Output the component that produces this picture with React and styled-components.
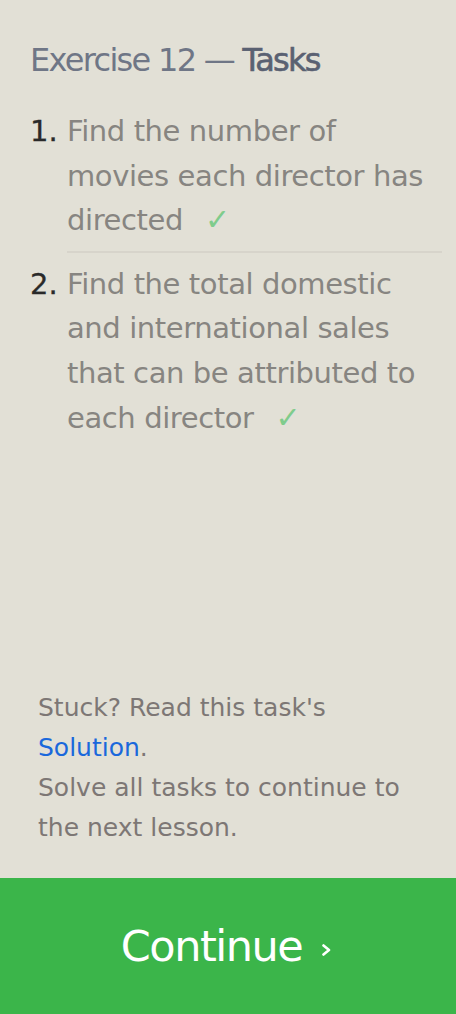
import React from "react";
import styled, { createGlobalStyle } from "styled-components";

const Global = createGlobalStyle`
  html, body { margin: 0; padding: 0; background: #e2e0d6; }
  body { font-family: "DejaVu Sans", Verdana, sans-serif; }
  #root { min-height: 100vh; }
`;

const Page = styled.div`
  width: 456px;
  height: 1014px;
  display: flex;
  flex-direction: column;
  background: #e2e0d6;
  overflow: hidden;
`;

const Panel = styled.div`
  flex: 1;
  display: flex;
  flex-direction: column;
  justify-content: space-between;
  padding: 40px 14px 30px 29px;
`;

const Title = styled.h2`
  margin: 0 0 29px 1px;
  font-size: 32px;
  font-weight: normal;
  color: #6f7686;
  line-height: 40px;
  letter-spacing: -1.7px;
  white-space: nowrap;
`;

const Strong = styled.span`
  color: #5a6172;
  -webkit-text-stroke: 0.6px #5a6172;
`;

const List = styled.ol`
  margin: 0;
  padding: 0;
  list-style: none;
`;

const Item = styled.li`
  display: flex;
  font-size: 29px;
  line-height: 44.6px;
`;

const Num = styled.span`
  box-sizing: border-box;
  color: #2a2a2a;
  width: 38px;
  flex: none;
  padding-left: 1px;
  -webkit-text-stroke: 0.3px #2a2a2a;
  padding-top: ${(p) => p.$pad || 0}px;
`;

const Text = styled.div`
  flex: 1;
  color: #878581;
  letter-spacing: -0.4px;
  padding: ${(p) => (p.$divider ? "0 6px 8px 0" : "9px 6px 0 0")};
  border-bottom: ${(p) => (p.$divider ? "2px solid #d7d4cb" : "none")};
`;

const Check = styled.span`
  color: #7fcc8c;
  margin-left: 22px;
  font-size: 30px;
`;

const Help = styled.div`
  padding-left: 9px;
  font-size: 25px;
  line-height: 40px;
  color: #7d7775;
`;

const Link = styled.a`
  color: #1a68dc;
  text-decoration: none;
`;

const Button = styled.button`
  flex: none;
  height: 136px;
  width: 100%;
  border: none;
  background: #3bb54a;
  color: #fff;
  font-family: inherit;
  font-size: 43px;
  letter-spacing: -1.5px;
  display: flex;
  align-items: center;
  justify-content: center;
  gap: 20px;
  padding: 0 4px 0 0;
  cursor: pointer;
`;

const Arrow = styled.svg`
  width: 9px;
  height: 12px;
  margin-top: 8px;
`;

export default function App() {
  return (
    <Page>
      <Global />
      <Panel>
        <div>
          <Title>
            Exercise 12 — <Strong>Tasks</Strong>
          </Title>
          <List>
            <Item>
              <Num>1.</Num>
              <Text $divider>
                Find the number of movies each director has directed
                <Check>✓</Check>
              </Text>
            </Item>
            <Item>
              <Num $pad={9}>2.</Num>
              <Text>
                Find the total domestic and international sales that can be
                attributed to each director
                <Check>✓</Check>
              </Text>
            </Item>
          </List>
        </div>
        <Help>
          Stuck? Read this task's
          <br />
          <Link href="#">Solution</Link>.
          <br />
          Solve all tasks to continue to the next lesson.
        </Help>
      </Panel>
      <Button>
        Continue
        <Arrow viewBox="0 0 9 12" aria-hidden="true">
          <polyline
            points="1.5,1.5 7,6 1.5,10.5"
            fill="none"
            stroke="#fff"
            strokeWidth="2.6"
            strokeLinecap="round"
            strokeLinejoin="round"
          />
        </Arrow>
      </Button>
    </Page>
  );
}
